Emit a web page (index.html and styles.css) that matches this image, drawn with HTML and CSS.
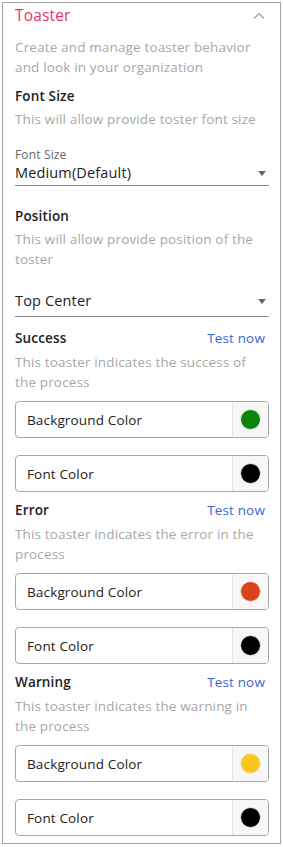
FILE: index.html
```html
<!DOCTYPE html>
<html lang="en">
<head>
    <meta charset="UTF-8">
    <meta name="viewport" content="width=device-width, initial-scale=1.0">
    <title>Toaster</title>
    <link rel="stylesheet" href="styles.css">
</head>
<body>
    <div class="panel">
        <div class="panel-head">
            <span class="panel-title">Toaster</span>
            <svg class="chevron" width="12" height="8" viewBox="0 0 12 8"><path d="M1 6.5 L6 1.5 L11 6.5" fill="none" stroke="#9a9a9a" stroke-width="1.2"/></svg>
        </div>
        <p class="intro">Create and manage toaster behavior and look in your organization</p>

        <h3 class="heading">Font Size</h3>
        <p class="hint">This will allow provide toster font size</p>
        <div class="select with-label">
            <span class="select-label">Font Size</span>
            <div class="select-value">
                <span>Medium(Default)</span>
                <span class="caret"></span>
            </div>
        </div>

        <h3 class="heading position">Position</h3>
        <p class="desc">This will allow provide position of the toster</p>
        <div class="select plain">
            <div class="select-value">
                <span>Top Center</span>
                <span class="caret"></span>
            </div>
        </div>

        <div class="toast-section first">
            <div class="section-head">
                <h3 class="heading">Success</h3>
                <a class="test-link" href="#">Test now</a>
            </div>
            <p class="desc">This toaster indicates the success of the process</p>
            <div class="color-field">
                <span>Background Color</span>
                <div class="swatch"><span class="dot" style="background:#0a840a"></span></div>
            </div>
            <div class="color-field">
                <span>Font Color</span>
                <div class="swatch"><span class="dot" style="background:#000"></span></div>
            </div>
        </div>

        <div class="toast-section">
            <div class="section-head">
                <h3 class="heading">Error</h3>
                <a class="test-link" href="#">Test now</a>
            </div>
            <p class="desc">This toaster indicates the error in the process</p>
            <div class="color-field">
                <span>Background Color</span>
                <div class="swatch"><span class="dot" style="background:#dc4418"></span></div>
            </div>
            <div class="color-field">
                <span>Font Color</span>
                <div class="swatch"><span class="dot" style="background:#000"></span></div>
            </div>
        </div>

        <div class="toast-section">
            <div class="section-head">
                <h3 class="heading">Warning</h3>
                <a class="test-link" href="#">Test now</a>
            </div>
            <p class="desc">This toaster indicates the warning in the process</p>
            <div class="color-field">
                <span>Background Color</span>
                <div class="swatch"><span class="dot" style="background:#fbc520"></span></div>
            </div>
            <div class="color-field">
                <span>Font Color</span>
                <div class="swatch"><span class="dot" style="background:#000"></span></div>
            </div>
        </div>
    </div>
</body>
</html>
```

FILE: styles.css
```css
* {
    margin: 0;
    padding: 0;
    box-sizing: border-box;
    font-family: "Open Sans", sans-serif;
    letter-spacing: 0.15px;
}

body {
    background: #fff;
    color: #222;
}

.panel {
    margin: 2px;
    border: 1px solid #a3a3a3;
    padding: 0 11px 7px 12px;
}

.panel-head {
    height: 25px;
    display: flex;
    align-items: center;
    justify-content: space-between;
}

.panel-title {
    color: #e8336d;
    font-size: 15.5px;
    line-height: 22px;
    margin-top: -1px;
}

.chevron {
    margin-right: 4px;
}

.intro,
.hint,
.desc {
    color: #a8a8a8;
    font-size: 13.5px;
    line-height: 19.5px;
}

.intro {
    margin-top: 10px;
}

.heading {
    font-size: 13.5px;
    font-weight: 600;
    line-height: 20px;
    color: #222;
}

.intro + .heading {
    margin-top: 9px;
}

.hint {
    margin-top: 3px;
    line-height: 20px;
}

.desc {
    margin-top: 4px;
}

.select {
    border-bottom: 1px solid #8a8a8a;
}

.select.with-label {
    margin-top: 19px;
    padding-bottom: 3px;
}

.select.plain {
    margin-top: 23px;
    padding-bottom: 6px;
}

.select-label {
    display: block;
    font-size: 12px;
    line-height: 13px;
    margin-bottom: 3px;
    color: #666;
}

.select-value {
    display: flex;
    align-items: center;
    justify-content: space-between;
    font-size: 14.5px;
    line-height: 18px;
}

.caret {
    width: 0;
    height: 0;
    border-left: 4.5px solid transparent;
    border-right: 4.5px solid transparent;
    border-top: 5px solid #666;
    margin-right: 3px;
}

.heading.position {
    margin-top: 20px;
}

.toast-section {
    margin-top: 8px;
}

.toast-section.first {
    margin-top: 11px;
}

.toast-section .desc {
    margin-top: 5px;
}

.section-head {
    display: flex;
    justify-content: space-between;
    align-items: center;
}

.test-link {
    color: #3d66d4;
    font-size: 13.5px;
    text-decoration: none;
    margin-right: 4px;
}

.color-field {
    display: flex;
    align-items: stretch;
    justify-content: space-between;
    height: 37px;
    border: 1px solid #a8a8a8;
    border-radius: 4px;
    font-size: 13.5px;
    color: #222;
    overflow: hidden;
    margin-top: 17px;
}

.desc + .color-field {
    margin-top: 9px;
}

.color-field > span {
    align-self: center;
    padding-left: 11px;
}

.swatch {
    width: 36px;
    background: #f7f7f7;
    border-left: 1px solid #e6e6e6;
    display: flex;
    align-items: center;
    justify-content: center;
}

.dot {
    width: 21px;
    height: 21px;
    border-radius: 50%;
    border: 1px solid #eee;
}
```
